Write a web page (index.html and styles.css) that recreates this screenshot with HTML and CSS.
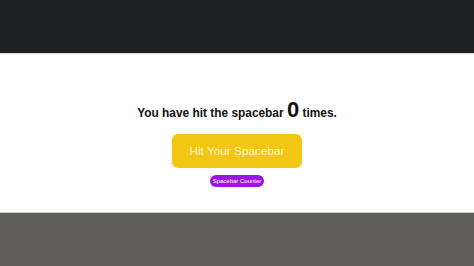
FILE: index.html
```html
<!DOCTYPE html>
<html>
<head>
<meta charset="utf-8">
<link rel="stylesheet" href="styles.css">
</head>
<body>
<header class="topbar"></header>
<main class="content">
  <h1 class="headline">You have hit the spacebar <span class="count">0</span> times.</h1>
  <button class="hit">Hit Your Spacebar</button>
  <span class="badge">Spacebar Counter</span>
</main>
<footer class="bottom"></footer>
</body>
</html>
```
FILE: styles.css
```css
html, body {
  margin: 0;
  padding: 0;
  height: 100%;
}
body {
  display: flex;
  flex-direction: column;
  font-family: "Liberation Sans", Arial, sans-serif;
  background: #ffffff;
}
.topbar {
  height: 53px;
  background: #1f2023;
  border-bottom: 1px solid #d8d8d8;
  flex: none;
}
.content {
  height: 158px;
  flex: none;
  display: flex;
  flex-direction: column;
  align-items: center;
  padding-top: 44px;
  box-sizing: border-box;
}
.headline {
  margin: 0;
  font-size: 11.9px;
  font-weight: bold;
  color: #111;
  line-height: 24px;
}
.count {
  font-size: 22px;
  vertical-align: baseline;
}
.hit {
  margin-top: 9px;
  width: 130px;
  height: 34px;
  background: #f3c514;
  border: none;
  border-radius: 6px;
  color: #fdf5d8;
  font-family: "Liberation Sans", Arial, sans-serif;
  font-size: 11.8px;
  padding: 0;
}
.badge {
  margin-top: 7px;
  background: #9d14e6;
  color: #fff;
  font-size: 6px;
  padding: 2px 3px;
  border-radius: 6px;
  line-height: 8px;
}
.bottom {
  flex: 1;
  background: #605f5c;
  border-top: 1px solid #c9c8c4;
}
```
